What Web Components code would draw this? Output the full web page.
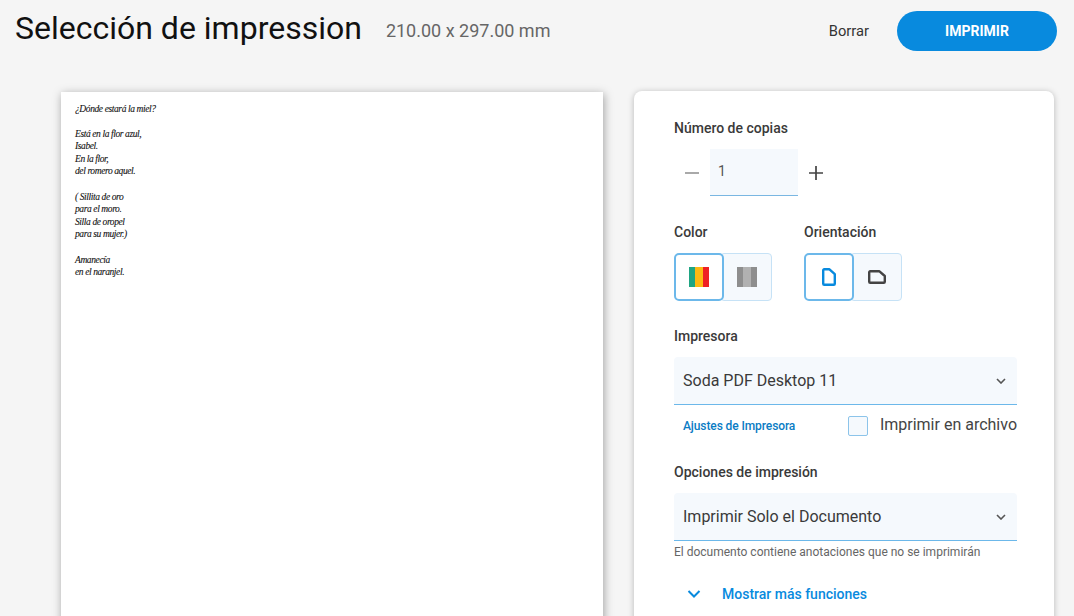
<!DOCTYPE html>
<html lang="es">
<head>
<meta charset="utf-8">
<title>Selección de impresión</title>
<style>
    html, body {
        margin: 0;
        height: 616px;
        overflow: hidden;
        background: #f5f5f5;
        font-family: Roboto, sans-serif;
    }
</style>
</head>
<body>
<print-app></print-app>

<script>
window.customElements.define("print-header", class extends HTMLElement {
    constructor() {
        super();
        this.attachShadow({ mode: "open" }).innerHTML = `
            <style>
                :host {
                    display: flex;
                    align-items: center;
                    height: 61px;
                    padding: 0 17px 0 15px;
                }
                h1 {
                    margin: 0 24px 0 0;
                    font-size: 32px;
                    font-weight: 400;
                    color: #111;
                    position: relative;
                    top: -3px;
                }
                .size {
                    flex: 1;
                    font-size: 18px;
                    color: #666;
                }
                .clear {
                    font-size: 14.7px;
                    color: #333;
                    margin-right: 28px;
                }
                .print {
                    width: 160px;
                    height: 40px;
                    border-radius: 20px;
                    background: #088ade;
                    color: #fff;
                    font-size: 14px;
                    font-weight: 700;
                    display: flex;
                    align-items: center;
                    justify-content: center;
                }
            </style>
            <h1>Selección de impression</h1>
            <span class="size">210.00 x 297.00 mm</span>
            <span class="clear">Borrar</span>
            <span class="print">IMPRIMIR</span>
        `;
    }
});

window.customElements.define("print-preview", class extends HTMLElement {
    constructor() {
        super();
        this.attachShadow({ mode: "open" }).innerHTML = `
            <style>
                :host {
                    display: block;
                    box-sizing: border-box;
                    width: 542px;
                    height: 600px;
                    margin: 31px 0 0 61px;
                    padding: 10.5px 14px;
                    background: #fff;
                    box-shadow: 1px 2px 9px rgba(0, 0, 0, .35);
                    font: italic 9.5px/12.6px "Liberation Serif", serif;
                    letter-spacing: -.4px;
                    -webkit-text-stroke: .1px #111;
                    color: #111;
                }
                p {
                    margin: 0 0 12.6px;
                }
            </style>
            <p>¿Dónde estará la miel?</p>
            <p>Está en la flor azul,<br>Isabel.<br>En la flor,<br>del romero aquel.</p>
            <p>( Sillita de oro<br>para el moro.<br>Silla de oropel<br>para su mujer.)</p>
            <p>Amanecía<br>en el naranjel.</p>
        `;
    }
});

window.customElements.define("copies-stepper", class extends HTMLElement {
    constructor() {
        super();
        this.attachShadow({ mode: "open" }).innerHTML = `
            <style>
                :host {
                    display: flex;
                    align-items: center;
                    height: 47px;
                }
                svg {
                    width: 16px;
                    height: 16px;
                }
                .minus { margin: 1px 10px 0 10px; }
                .plus { margin: 1px 0 0 10px; }
                .value {
                    box-sizing: border-box;
                    width: 88px;
                    height: 47px;
                    padding: 0 8px 3px;
                    display: flex;
                    align-items: center;
                    background: #f5f9fd;
                    border-bottom: 1px solid #7ab7e2;
                    font-size: 14px;
                    color: #555;
                }
            </style>
            <svg class="minus" viewBox="0 0 16 16"><path d="M1 8h14" stroke="#9a9a9a" stroke-width="1.7"/></svg>
            <div class="value">1</div>
            <svg class="plus" viewBox="0 0 16 16"><path d="M1 8h14M8 1v14" stroke="#444" stroke-width="1.7"/></svg>
        `;
    }
});

window.customElements.define("toggle-pair", class extends HTMLElement {
    constructor() {
        super();
        this.attachShadow({ mode: "open" }).innerHTML = `
            <style>
                :host {
                    display: block;
                    font-size: 14px;
                    font-weight: 500;
                    color: #3a3a3a;
                }
                .label {
                    line-height: 16px;
                    margin-bottom: 13px;
                }
                .pair {
                    display: flex;
                    width: 98px;
                    height: 48px;
                }
                ::slotted([slot="on"]), ::slotted([slot="off"]) {
                    box-sizing: border-box;
                    height: 48px;
                    display: flex;
                    align-items: center;
                    justify-content: center;
                    border-radius: 4px;
                }
                ::slotted([slot="on"]) {
                    width: 50px;
                    background: #fff;
                    border: 2px solid #6cb8ea;
                    border-radius: 5px;
                    position: relative;
                    z-index: 1;
                }
                ::slotted([slot="off"]) {
                    width: 52px;
                    margin-left: -4px;
                    padding-left: 1px;
                    background: #f5f9fd;
                    border: 1px solid #c6e2f6;
                }
            </style>
            <div class="label"><slot name="label"></slot></div>
            <div class="pair"><slot name="on"></slot><slot name="off"></slot></div>
        `;
    }
});

window.customElements.define("select-box", class extends HTMLElement {
    constructor() {
        super();
        this.attachShadow({ mode: "open" }).innerHTML = `
            <style>
                :host {
                    box-sizing: border-box;
                    display: flex;
                    align-items: center;
                    justify-content: space-between;
                    height: 48px;
                    padding: 0 11px 0 9px;
                    background: #f5f9fd;
                    border-radius: 4px 4px 0 0;
                    border-bottom: 1px solid #6cb8ea;
                    font-size: 16px;
                    color: #3a3a3a;
                }
                svg {
                    width: 10px;
                    height: 6px;
                }
            </style>
            <slot></slot>
            <svg viewBox="0 0 10 6"><path d="M1 1l4 4 4-4" fill="none" stroke="#555" stroke-width="1.6"/></svg>
        `;
    }
});

window.customElements.define("print-panel", class extends HTMLElement {
    constructor() {
        super();
        this.attachShadow({ mode: "open" }).innerHTML = `
            <style>
                :host {
                    display: block;
                    box-sizing: border-box;
                    width: 420px;
                    height: 600px;
                    margin: 30px 0 0 31px;
                    padding: 29px 37px 0 40px;
                    background: #fff;
                    border-radius: 8px 8px 0 0;
                    box-shadow: 0 1px 6px rgba(0, 0, 0, .25);
                }
                .title {
                    font-size: 14px;
                    font-weight: 500;
                    line-height: 16px;
                    color: #3a3a3a;
                }
                .copies { margin: 13px 0 0; }
                .toggles {
                    display: flex;
                    gap: 32px;
                    margin-top: 28px;
                }
                .printer { margin-top: 27px; }
                select-box { margin-top: 13px; }
                .extra {
                    display: flex;
                    align-items: center;
                    justify-content: space-between;
                    height: 42px;
                    padding-left: 9px;
                }
                .link {
                    font-size: 12px;
                    font-weight: 500;
                    letter-spacing: -.1px;
                    color: #0a7cc4;
                }
                .file {
                    display: flex;
                    align-items: center;
                    gap: 12px;
                    font-size: 16px;
                    line-height: 18px;
                    color: #444;
                }
                .file-text {
                    padding-bottom: 2px;
                }
                .check {
                    box-sizing: border-box;
                    width: 20px;
                    height: 20px;
                    border: 1px solid #8cc4ea;
                    border-radius: 2px;
                    background: #f5f9fd;
                }
                .options { margin-top: 17px; }
                .note {
                    margin-top: 4px;
                    font-size: 12px;
                    line-height: 14px;
                    color: #666;
                }
                .more {
                    display: flex;
                    align-items: center;
                    margin-top: 27px;
                    padding-left: 13px;
                    font-size: 14px;
                    font-weight: 500;
                    line-height: 16px;
                    color: #088ade;
                }
                .more svg {
                    width: 14px;
                    height: 8px;
                    margin-right: 21px;
                }
            </style>
            <div class="title">Número de copias</div>
            <copies-stepper class="copies"></copies-stepper>
            <div class="toggles">
                <toggle-pair>
                    <span slot="label">Color</span>
                    <div slot="on">
                        <svg width="20" height="20" viewBox="0 0 20 20"><rect width="6" height="20" fill="#1fa583"/><rect x="6" width="8" height="20" fill="#fdb813"/><rect x="14" width="6" height="20" fill="#ee2024"/></svg>
                    </div>
                    <div slot="off">
                        <svg width="20" height="20" viewBox="0 0 20 20"><rect width="6" height="20" fill="#8e8e8e"/><rect x="6" width="8" height="20" fill="#b1b1b1"/><rect x="14" width="6" height="20" fill="#8e8e8e"/></svg>
                    </div>
                </toggle-pair>
                <toggle-pair>
                    <span slot="label">Orientación</span>
                    <div slot="on">
                        <svg width="14" height="18" viewBox="0 0 14 18"><path d="M2.200 1.200h5l5.600 5v9.600a1 1 0 0 1-1 1H2.200a1 1 0 0 1-1-1V2.200a1 1 0 0 1 1-1z" fill="none" stroke="#088ade" stroke-width="2.400" stroke-linejoin="round"/></svg>
                    </div>
                    <div slot="off">
                        <svg width="18" height="14" viewBox="0 0 18 14"><path d="M2.200 1.200h9l5.600 4.800v5.800a1 1 0 0 1-1 1H2.200a1 1 0 0 1-1-1V2.200a1 1 0 0 1 1-1z" fill="none" stroke="#444" stroke-width="2.400" stroke-linejoin="round"/></svg>
                    </div>
                </toggle-pair>
            </div>
            <div class="title printer">Impresora</div>
            <select-box>Soda PDF Desktop 11</select-box>
            <div class="extra">
                <span class="link">Ajustes de Impresora</span>
                <span class="file"><span class="check"></span><span class="file-text">Imprimir en archivo</span></span>
            </div>
            <div class="title options">Opciones de impresión</div>
            <select-box>Imprimir Solo el Documento</select-box>
            <div class="note">El documento contiene anotaciones que no se imprimirán</div>
            <div class="more">
                <svg viewBox="0 0 14 8"><path d="M1.500 1l5.500 5.500L12.500 1" fill="none" stroke="#088ade" stroke-width="2"/></svg>
                Mostrar más funciones
            </div>
        `;
    }
});

window.customElements.define("print-app", class extends HTMLElement {
    constructor() {
        super();
        this.attachShadow({ mode: "open" }).innerHTML = `
            <style>
                :host {
                    display: block;
                    height: 616px;
                    overflow: hidden;
                }
                .main {
                    display: flex;
                    align-items: flex-start;
                }
            </style>
            <print-header></print-header>
            <div class="main">
                <print-preview></print-preview>
                <print-panel></print-panel>
            </div>
        `;
    }
});
</script>
</body>
</html>
